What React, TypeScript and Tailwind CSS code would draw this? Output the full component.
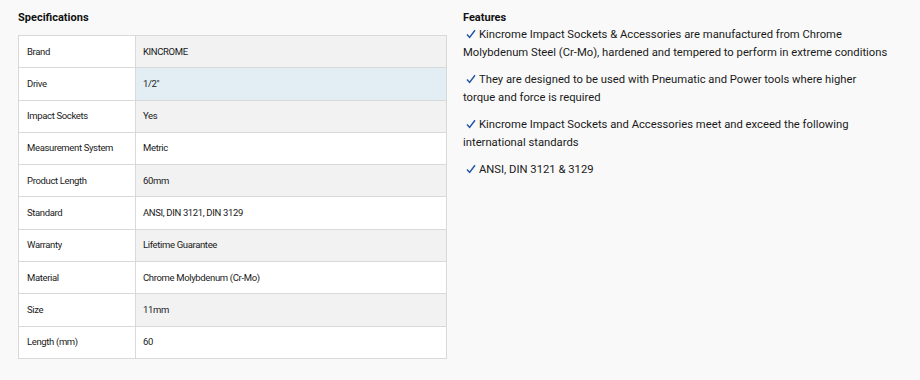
import React from "react";

const rows: [string, string][] = [
  ["Brand", "KINCROME"],
  ["Drive", "1/2\""],
  ["Impact Sockets", "Yes"],
  ["Measurement System", "Metric"],
  ["Product Length", "60mm"],
  ["Standard", "ANSI, DIN 3121, DIN 3129"],
  ["Warranty", "Lifetime Guarantee"],
  ["Material", "Chrome Molybdenum (Cr-Mo)"],
  ["Size", "11mm"],
  ["Length (mm)", "60"],
];

const features = [
  "Kincrome Impact Sockets & Accessories are manufactured from Chrome Molybdenum Steel (Cr-Mo), hardened and tempered to perform in extreme conditions",
  "They are designed to be used with Pneumatic and Power tools where higher torque and force is required",
  "Kincrome Impact Sockets and Accessories meet and exceed the following international standards",
  "ANSI, DIN 3121 & 3129",
];

function Check() {
  return (
    <svg
      width="10"
      height="10"
      viewBox="0 0 10 10"
      className="inline-block mr-[3px] ml-[3px] align-[-1px]"
    >
      <path d="M1 5.6 L3.6 8.4 L9 1.2" fill="none" stroke="#2456a6" strokeWidth="1.5" />
    </svg>
  );
}

export default function App() {
  return (
    <div
      className="w-[920px] h-[380px] bg-[#f9f9f9] text-[#1a1a1a] flex pl-[18px] pt-[11px]"
      style={{ fontFamily: "Roboto, 'Liberation Sans', sans-serif" }}
    >
      <div className="w-[429px]">
        <h2 className="text-[11px] font-bold leading-[14px] text-[#111]">Specifications</h2>
        <table className="mt-[10px] w-[429px] border-collapse text-[9.5px] tracking-[-0.35px]">
          <tbody>
            {rows.map(([k, v], i) => {
              const valBg = i === 1 ? "bg-[#e3eef4]" : i % 2 === 0 ? "bg-[#f2f2f2]" : "bg-white";
              return (
                <tr key={k} className="h-[32.3px]">
                  <td className="w-[117px] border border-[#d9d9d9] bg-white pl-[8px] align-middle">{k}</td>
                  <td className={`border border-[#d9d9d9] pl-[7px] align-middle ${valBg}`}>{v}</td>
                </tr>
              );
            })}
          </tbody>
        </table>
      </div>
      <div className="ml-[16px] w-[428px]">
        <h2 className="text-[11px] font-bold leading-[14px] text-[#111]">Features</h2>
        <div className="mt-[1px] flex flex-col gap-[9px] text-[11.25px] leading-[18px]">
          {features.map((f) => (
            <p key={f}>
              <Check />
              {f}
            </p>
          ))}
        </div>
      </div>
    </div>
  );
}
